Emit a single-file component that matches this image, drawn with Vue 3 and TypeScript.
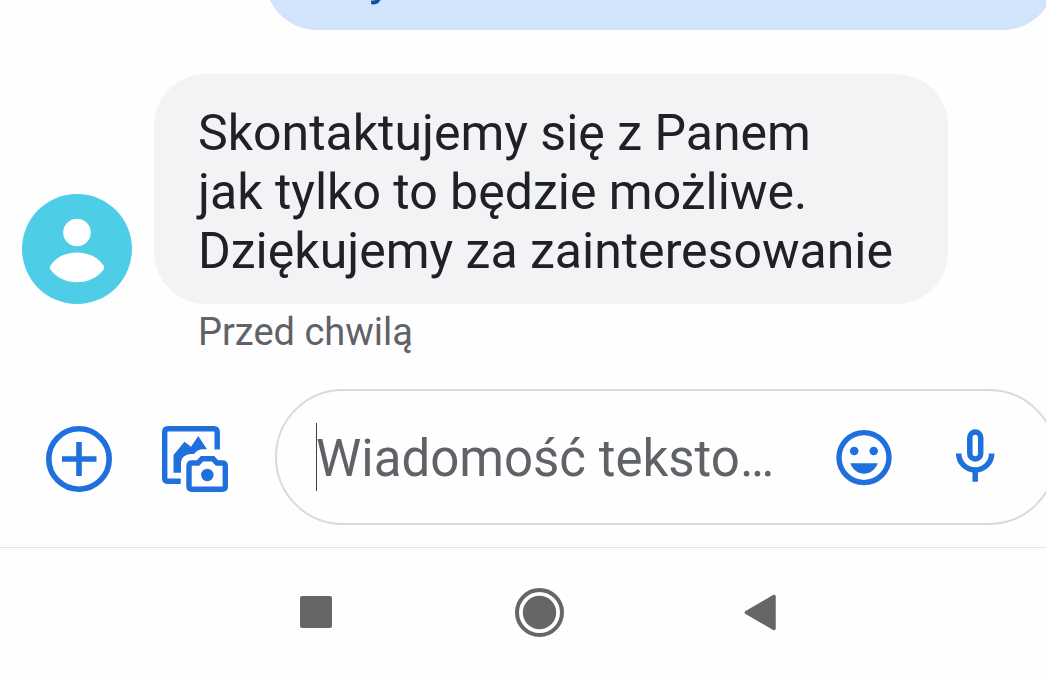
<script setup lang="ts">
import { ref } from 'vue'

interface Message {
  lines: string[]
  time: string
}

const draft = ref('')
const incoming: Message = {
  lines: [
    'Skontaktujemy się z Panem',
    'jak tylko to będzie możliwe.',
    'Dziękujemy za zainteresowanie',
  ],
  time: 'Przed chwilą',
}
</script>

<template>
  <div class="screen">
    <main class="thread">
      <p class="bubble sent">y</p>

      <div class="received-row">
        <svg class="avatar" viewBox="0 0 110 110" aria-hidden="true">
          <circle cx="55" cy="55" r="55" fill="#4ecde6" />
          <circle cx="55" cy="38.500" r="13.800" fill="#fff" />
          <path d="M28.500 71.500C40 54 70 54 81.500 71.500Q83 73.500 81.500 75.500C70 92.500 40 92.500 28.500 75.500Q27 73.500 28.500 71.500Z" fill="#fff" />
        </svg>
        <p class="bubble received">
          <span v-for="line in incoming.lines" :key="line" class="line">{{ line }}</span>
        </p>
      </div>
      <p class="time">{{ incoming.time }}</p>
    </main>

    <form class="composer" @submit.prevent>
      <button type="button" class="icon-button" aria-label="Dodaj">
        <svg width="66" height="70" viewBox="0 -4 66 70">
          <circle cx="33" cy="33" r="30.200" fill="none" stroke="#1f70dc" stroke-width="5.600" />
          <path d="M33 16V50M16 33H50.500" fill="none" stroke="#1f70dc" stroke-width="5.600" />
        </svg>
      </button>
      <button type="button" class="icon-button" aria-label="Galeria i aparat">
        <svg width="66" height="70" viewBox="0 -4 66 70">
          <g fill="none" stroke="#1f70dc" stroke-width="5.400">
            <path d="M55.200 23.500V6Q55.200 2.700 52 2.700H6Q2.700 2.700 2.700 6V52Q2.700 55.300 6 55.300H18.700" />
            <path d="M27 40Q27 37 30 37H36L40 32.700H51L55 37H60.300Q63.300 37 63.300 40V60.300Q63.300 63.300 60.300 63.300H30Q27 63.300 27 60.300Z" />
          </g>
          <path d="M11.500 46.700V29L22.500 15.700L29 20.700L36.300 10L45 23.300H40Q35 24 32 28H28Q20 29 19 36V46.700Z" fill="#1f70dc" />
          <circle cx="45.300" cy="49" r="6.200" fill="#1f70dc" />
        </svg>
      </button>

      <div class="field">
        <span class="caret" aria-hidden="true"></span>
        <input v-model="draft" type="text" placeholder="Wiadomość teksto…" aria-label="Wiadomość tekstowa" />
        <button type="button" class="icon-button emoji" aria-label="Emotikony">
          <svg width="56" height="58" viewBox="0 -2 56 58">
            <circle cx="28" cy="27.600" r="25" fill="none" stroke="#1f70dc" stroke-width="5.400" />
            <circle cx="18.200" cy="21" r="4.300" fill="#1f70dc" />
            <circle cx="37.700" cy="21" r="4.300" fill="#1f70dc" />
            <path d="M14.200 33.300H41.900C39 40 34 43.700 28 43.700S17 40 14.200 33.300Z" fill="#1f70dc" />
          </svg>
        </button>
        <button type="button" class="icon-button" aria-label="Nagraj wiadomość głosową">
          <svg width="39" height="57" viewBox="0 0 39 57">
            <g fill="none" stroke="#1f70dc" stroke-width="5.500">
              <rect x="13.800" y="3" width="10.900" height="27" rx="5.450" />
              <path d="M2.700 24.500A16.500 16.500 0 0 0 35.700 24.500M19.200 41V52.700" />
            </g>
          </svg>
        </button>
      </div>
    </form>

    <nav class="system-bar" aria-label="Nawigacja systemowa">
      <button type="button" class="icon-button" aria-label="Ostatnie aplikacje">
        <svg width="50" height="50" viewBox="0 0 50 50"><rect x="9" y="8" width="32" height="32" rx="2" fill="#666" /></svg>
      </button>
      <button type="button" class="icon-button" aria-label="Ekran główny">
        <svg width="50" height="50" viewBox="0 0 50 50">
          <circle cx="25.500" cy="24.500" r="22.500" fill="none" stroke="#666" stroke-width="4" />
          <circle cx="25.500" cy="24.500" r="16.700" fill="#666" />
        </svg>
      </button>
      <button type="button" class="icon-button" aria-label="Wstecz">
        <svg width="50" height="50" viewBox="0 0 50 50">
          <path d="M9.500 24.500L37 8.500V40.500Z" fill="#666" stroke="#666" stroke-width="3.500" stroke-linejoin="round" />
        </svg>
      </button>
    </nav>
  </div>
</template>

<style>
body {
  margin: 0;
  background: #fff;
}
</style>

<style scoped>
.screen {
  min-height: 100vh;
  overflow: hidden;
  background: #fefefe;
  font-family: Roboto, "Noto Sans", sans-serif;
  color: #202124;
}

.thread {
  display: flow-root;
}

.bubble {
  margin: 0;
  padding: 30px 55px 23px 44px;
  border-radius: 52px;
  font-size: 50px;
  line-height: 59px;
}

.sent {
  margin: -82px -9px 0 265px;
  padding-left: 104px;
  background: #d2e3fc;
  color: #174ea6;
}

.received-row {
  display: flex;
  align-items: flex-end;
  gap: 22px;
  margin: 44px 0 0 22px;
}

.avatar {
  flex: none;
  width: 110px;
  height: 110px;
}

.received {
  background: #f1f3f5;
}

.line {
  display: block;
  white-space: nowrap;
}

.time {
  margin: 3px 0 0 198px;
  font-size: 38px;
  line-height: 50px;
  color: #5f6368;
}

.composer {
  display: flex;
  align-items: center;
  margin: 32px -11px 22px 0;
  padding-left: 46px;
  gap: 50px;
}

.icon-button {
  display: block;
  flex: none;
  padding: 0;
  border: 0;
  background: none;
  cursor: pointer;
}

.icon-button svg {
  display: block;
}

.field {
  display: flex;
  flex: 1;
  align-items: center;
  min-width: 0;
  height: 136px;
  margin-left: -3px;
  padding: 0 60px 0 39px;
  border: 2px solid #dadada;
  border-radius: 68px;
  box-sizing: border-box;
}

.caret {
  flex: none;
  width: 1px;
  height: 68px;
  margin-right: -1px;
  background: #3c4043;
}

.field input {
  flex: 1;
  min-width: 0;
  padding: 4px 0 0;
  border: 0;
  outline: 0;
  background: none;
  font: 51px/60px Roboto, "Noto Sans", sans-serif;
  color: #202124;
}

.field input::placeholder {
  color: #5f6368;
  opacity: 1;
}

.emoji {
  margin-right: 64px;
}

.system-bar {
  display: flex;
  justify-content: center;
  gap: 173px;
  padding: 40px 0 39px 32px;
  border-top: 1px solid #e4e4e4;
}
</style>
